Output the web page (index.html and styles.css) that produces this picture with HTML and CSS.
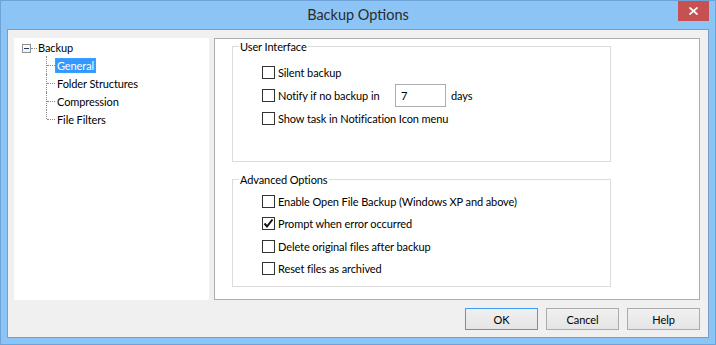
FILE: index.html
```html
<!DOCTYPE html>
<html lang="en">
<head>
  <meta charset="UTF-8" />
  <title>Backup Options</title>
  <link rel="stylesheet" href="styles.css">
</head>
<body>
  <div class="window">
    <div class="titlebar">
      <span class="title">Backup Options</span>
      <button class="close" title="Close">
        <svg width="9" height="8" viewBox="0 0 9 8"><path d="M0.5 0.5 L8.5 7.5 M8.5 0.5 L0.5 7.5" stroke="#fff" stroke-width="1.7" fill="none"/></svg>
      </button>
    </div>

    <div class="client">
      <div class="main">
        <!-- Settings tree -->
        <div class="tree">
          <div class="root">
            <span class="expander"></span>
            <span class="stub"></span>
            <span class="label">Backup</span>
          </div>
          <ul class="children">
            <li><span class="label selected">General</span></li>
            <li><span class="label">Folder Structures</span></li>
            <li><span class="label">Compression</span></li>
            <li><span class="label">File Filters</span></li>
          </ul>
        </div>

        <!-- Page for the selected node -->
        <div class="panel">
          <fieldset class="group group-ui">
            <legend>User Interface</legend>
            <div class="check"><span class="box"></span><span>Silent backup</span></div>
            <div class="check">
              <span class="box"></span><span class="notify">Notify if no backup in</span>
              <span class="textbox">7</span><span class="days">days</span>
            </div>
            <div class="check"><span class="box"></span><span>Show task in Notification Icon menu</span></div>
          </fieldset>

          <fieldset class="group group-adv">
            <legend>Advanced Options</legend>
            <div class="check"><span class="box"></span><span>Enable Open File Backup (Windows XP and above)</span></div>
            <div class="check">
              <span class="box">
                <svg width="11" height="11" viewBox="0 0 11 11"><path d="M1.5 5.5 L4 8.5 L9.5 1.5" stroke="#111" stroke-width="2" fill="none"/></svg>
              </span><span>Prompt when error occurred</span>
            </div>
            <div class="check"><span class="box"></span><span>Delete original files after backup</span></div>
            <div class="check"><span class="box"></span><span>Reset files as archived</span></div>
          </fieldset>
        </div>
      </div>

      <div class="buttons">
        <button class="btn default">OK</button>
        <button class="btn">Cancel</button>
        <button class="btn">Help</button>
      </div>
    </div>
  </div>
</body>
</html>
```

FILE: styles.css
```css
/* Windows 8 style dialog */
body {
  margin: 0;
  font-family: 'Lato', 'Noto Sans', sans-serif;
  font-size: 11px;
  letter-spacing: -0.1px;
  color: #000;
}

.window {
  width: 716px;
  height: 345px;
  box-sizing: border-box;
  background: #8cc4f6;
  border: 1px solid #6ea2d8;
  display: flex;
  flex-direction: column;
}

.titlebar {
  height: 28px;
  display: grid;
  grid-template-columns: 1fr auto 1fr;
}

.title {
  grid-column: 2;
  line-height: 28px;
  font-size: 14.5px;
  letter-spacing: 0;
  color: #2b2b2b;
}

.close {
  grid-column: 3;
  justify-self: end;
  align-self: start;
  width: 31px;
  height: 20px;
  margin-right: 6px;
  padding: 0;
  border: none;
  background: #c75050;
  display: flex;
  align-items: center;
  justify-content: center;
}

.client {
  flex: 1;
  margin: 0 6px 6px;
  background: #f0f0f0;
  border: 1px solid #7e9cbf;
  padding: 8px 8px 7px 6px;
  display: flex;
  flex-direction: column;
}

.main {
  height: 262px;
  display: flex;
  gap: 5px;
}

/* Tree view */
.tree {
  width: 195px;
  background: #fff;
}

.root {
  height: 18px;
  display: flex;
  align-items: center;
  padding-left: 8px;
}

.expander {
  width: 7px;
  height: 7px;
  margin-top: 2px;
  border: 1px solid #8e8f8f;
  position: relative;
  background: linear-gradient(#fff, #f0f0f0);
}

.expander::after {
  content: "";
  position: absolute;
  left: 1px;
  top: 3px;
  width: 5px;
  height: 1px;
  background: #1e3c6b;
}

.stub {
  width: 6px;
  margin-top: 2px;
  border-top: 1px dotted #8a8a8a;
}

.label {
  padding: 0 1px;
  border: 1px solid transparent;
  line-height: 13px;
  white-space: nowrap;
}

.root .label {
  border: none;
  padding-left: 1px;
}

.label.selected {
  background: #3399ff;
  color: #fff;
  border: 1px dotted #d58a2a;
}

.children {
  list-style: none;
  margin: 0;
  padding: 0 0 0 32px;
}

.children li {
  position: relative;
  height: 18px;
  display: flex;
  align-items: center;
  padding-left: 9px;
}

.children li::before {
  content: "";
  position: absolute;
  left: 0;
  top: 0;
  bottom: 0;
  border-left: 1px dotted #8a8a8a;
}

.children li:last-child::before {
  bottom: 9px;
}

.children li::after {
  content: "";
  position: absolute;
  left: 1px;
  top: 9px;
  width: 8px;
  border-top: 1px dotted #8a8a8a;
}

/* Property page */
.panel {
  width: 486px;
  box-sizing: border-box;
  background: #fff;
  border: 1px solid #adadad;
  padding: 0 0 0 17px;
}

.group {
  width: 379px;
  box-sizing: border-box;
  margin: 0;
  border: 1px solid #dcdcdc;
  padding: 0 0 0 6px;
}

.group legend {
  padding: 0 1px;
  line-height: 15px;
}

.group-ui {
  height: 123px;
  padding-top: 7px;
}

.group-ui .check {
  height: 23px;
}

.group-adv {
  height: 115px;
  margin-top: 10px;
  padding-top: 3px;
}

.group-adv .check {
  height: 22.5px;
}

.check {
  display: flex;
  align-items: center;
  margin-left: 23px;
  white-space: nowrap;
}

.box {
  width: 11px;
  height: 11px;
  border: 1px solid #333;
  background: #fff;
  margin-right: 3px;
  display: flex;
  align-items: center;
  justify-content: center;
  flex-shrink: 0;
}

.notify {
  width: 117px;
}

.textbox {
  width: 44px;
  height: 21px;
  border: 1px solid #abadb3;
  padding-left: 5px;
  line-height: 21px;
  background: #fff;
}

.days {
  margin-left: 5px;
}

/* Dialog buttons */
.buttons {
  margin-top: 8px;
  height: 22px;
  display: flex;
  justify-content: flex-end;
  gap: 8px;
}

.btn {
  width: 73px;
  height: 22px;
  border: 1px solid #acacac;
  background: linear-gradient(#f0f0f0, #e5e5e5);
  font-family: inherit;
  font-size: 11px;
  letter-spacing: -0.1px;
  color: #000;
  padding: 0;
}

.btn.default {
  border-color: #3c9ef5;
}
```
